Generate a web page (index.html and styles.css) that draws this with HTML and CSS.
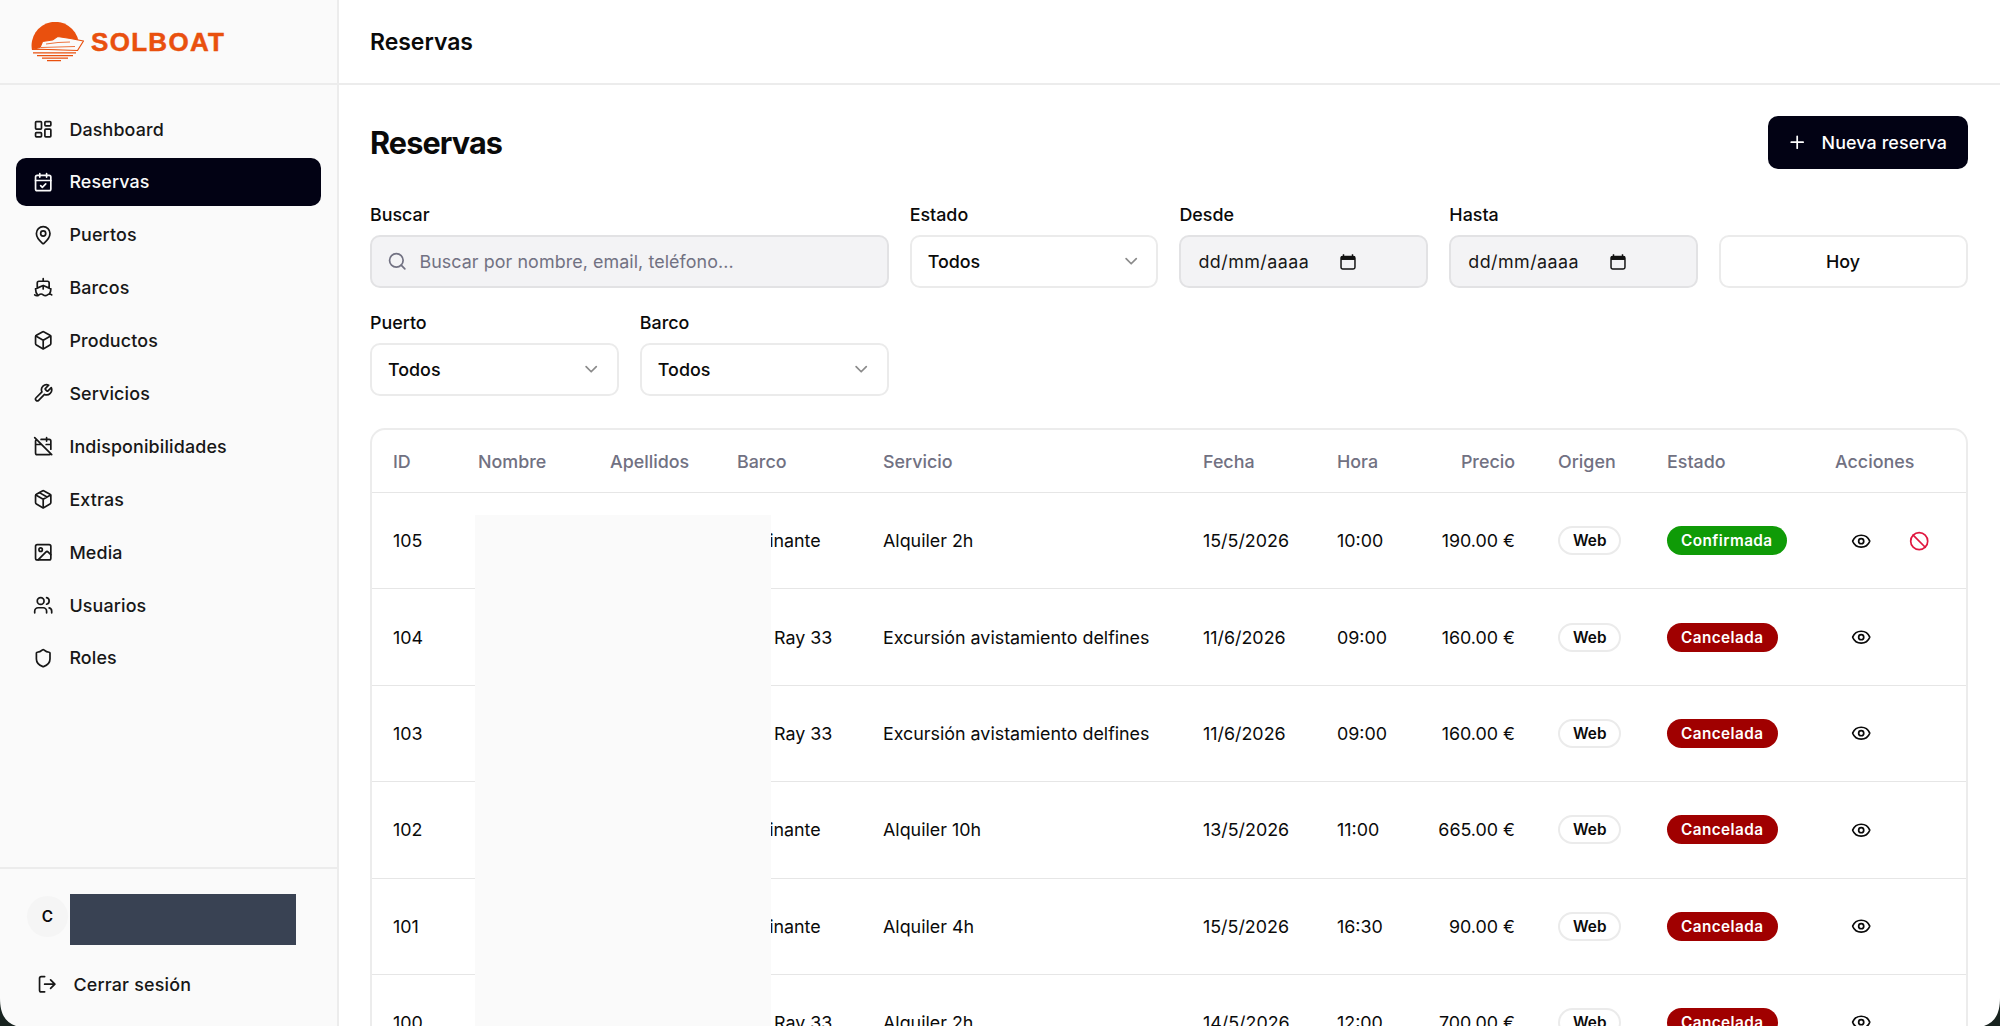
FILE: index.html
```html
<!DOCTYPE html>
<html lang="es">
<head>
    <meta charset="UTF-8">
    <title>Reservas - Solboat</title>
    <link rel="stylesheet" href="styles.css">
</head>
<body>

<svg class="sprite" width="0" height="0">
    <symbol id="i-dashboard" viewBox="0 0 24 24"><rect x="3" y="3" width="7" height="9" rx="1"/><rect x="14" y="3" width="7" height="5" rx="1"/><rect x="14" y="12" width="7" height="9" rx="1"/><rect x="3" y="16" width="7" height="5" rx="1"/></symbol>
    <symbol id="i-calendar" viewBox="0 0 24 24"><path d="M8 2v4M16 2v4M3 10h18m-12 6 2 2 4-4"/><rect x="3" y="4" width="18" height="18" rx="2"/></symbol>
    <symbol id="i-pin" viewBox="0 0 24 24"><path d="M20 10c0 4.993-5.539 10.193-7.399 11.799a1 1 0 0 1-1.202 0C9.539 20.193 4 14.993 4 10a8 8 0 0 1 16 0"/><circle cx="12" cy="10" r="3"/></symbol>
    <symbol id="i-ship" viewBox="0 0 24 24"><path d="M12 10.189V14M12 2v3M19 13V7a2 2 0 0 0-2-2H7a2 2 0 0 0-2 2v6M19.38 20A11.6 11.6 0 0 0 21 14l-8.188-3.639a2 2 0 0 0-1.624 0L3 14a11.6 11.6 0 0 0 2.81 7.76"/><path d="M2 21c.6.5 1.2 1 2.5 1 2.5 0 2.5-2 5-2 1.3 0 1.9.5 2.5 1s1.2 1 2.5 1c2.5 0 2.5-2 5-2 1.3 0 1.9.5 2.5 1"/></symbol>
    <symbol id="i-box" viewBox="0 0 24 24"><path d="M21 8a2 2 0 0 0-1-1.73l-7-4a2 2 0 0 0-2 0l-7 4A2 2 0 0 0 3 8v8a2 2 0 0 0 1 1.73l7 4a2 2 0 0 0 2 0l7-4A2 2 0 0 0 21 16Z"/><path d="m3.3 7 8.7 5 8.7-5M12 22V12"/></symbol>
    <symbol id="i-package" viewBox="0 0 24 24"><path d="M11 21.73a2 2 0 0 0 2 0l7-4A2 2 0 0 0 21 16V8a2 2 0 0 0-1-1.73l-7-4a2 2 0 0 0-2 0l-7 4A2 2 0 0 0 3 8v8a2 2 0 0 0 1 1.73z"/><path d="M12 22V12M3.29 7 12 12l8.71-5M7.5 4.27l9 5.15"/></symbol>
    <symbol id="i-wrench" viewBox="0 0 24 24"><path d="M14.7 6.3a1 1 0 0 0 0 1.4l1.6 1.6a1 1 0 0 0 1.4 0l3.77-3.77a6 6 0 0 1-7.94 7.94l-6.91 6.91a2.12 2.12 0 0 1-3-3l6.91-6.91a6 6 0 0 1 7.94-7.94l-3.76 3.76z"/></symbol>
    <symbol id="i-calendar-off" viewBox="0 0 24 24"><path d="M4.2 4.2A2 2 0 0 0 3 6v14a2 2 0 0 0 2 2h14a2 2 0 0 0 1.82-1.18M21 15.5V6a2 2 0 0 0-2-2H9.5M16 2v4M3 10h7M21 10h-5.5M2 2l20 20"/></symbol>
    <symbol id="i-image" viewBox="0 0 24 24"><rect x="3" y="3" width="18" height="18" rx="2"/><circle cx="9" cy="9" r="2"/><path d="m21 15-3.086-3.086a2 2 0 0 0-2.828 0L6 21"/></symbol>
    <symbol id="i-users" viewBox="0 0 24 24"><path d="M16 21v-2a4 4 0 0 0-4-4H6a4 4 0 0 0-4 4v2M22 21v-2a4 4 0 0 0-3-3.87M16 3.13a4 4 0 0 1 0 7.75"/><circle cx="9" cy="7" r="4"/></symbol>
    <symbol id="i-shield" viewBox="0 0 24 24"><path d="M20 13c0 5-3.5 7.5-7.66 8.95a1 1 0 0 1-.67-.01C7.5 20.5 4 18 4 13V6a1 1 0 0 1 1-1c2 0 4.5-1.2 6.24-2.72a1.17 1.17 0 0 1 1.52 0C14.51 3.81 17 5 19 5a1 1 0 0 1 1 1z"/></symbol>
    <symbol id="i-logout" viewBox="0 0 24 24"><path d="M9 21H5a2 2 0 0 1-2-2V5a2 2 0 0 1 2-2h4M16 17l5-5-5-5M21 12H9"/></symbol>
    <symbol id="i-search" viewBox="0 0 24 24"><path d="m21 21-4.3-4.3"/><circle cx="11" cy="11" r="8"/></symbol>
    <symbol id="i-chevron" viewBox="0 0 24 24"><path d="m6 9 6 6 6-6"/></symbol>
    <symbol id="i-plus" viewBox="0 0 24 24"><path d="M5 12h14M12 5v14"/></symbol>
    <symbol id="i-eye" viewBox="0 0 24 24"><path d="M2.062 12.348a1 1 0 0 1 0-.696 10.75 10.75 0 0 1 19.876 0 1 1 0 0 1 0 .696 10.75 10.75 0 0 1-19.876 0"/><circle cx="12" cy="12" r="3"/></symbol>
    <symbol id="i-ban" viewBox="0 0 24 24"><circle cx="12" cy="12" r="10"/><path d="m4.9 4.9 14.2 14.2"/></symbol>
</svg>

<aside class="sidebar">
    <div class="brand">
        <svg class="brand-mark" viewBox="30 22 54 40">
            <path class="sun" d="M32 50A23.500 23.500 0 0 1 78.500 41L76 50z"/>
            <path class="hull" d="M33 49l7-1.500 2.500-6 10-1.500 5-3.500 13 2 13 2.500-6 9.500z"/>
            <path class="hull-line" d="M46 44l12-1.500 12-.500M41 47.500l34-1"/>
            <path class="sun" d="M33 52.300h43v1.200H33zM37 55h36v1.200H37zM42 57.600h26v1.200H42zM47 60h14v1.200H47z"/>
        </svg>
        <span class="brand-name">SOLBOAT</span>
    </div>
    <nav class="nav">
        <a class="nav-item"><svg class="icon"><use href="#i-dashboard"/></svg>Dashboard</a>
        <a class="nav-item active"><svg class="icon"><use href="#i-calendar"/></svg>Reservas</a>
        <a class="nav-item"><svg class="icon"><use href="#i-pin"/></svg>Puertos</a>
        <a class="nav-item"><svg class="icon"><use href="#i-ship"/></svg>Barcos</a>
        <a class="nav-item"><svg class="icon"><use href="#i-box"/></svg>Productos</a>
        <a class="nav-item"><svg class="icon"><use href="#i-wrench"/></svg>Servicios</a>
        <a class="nav-item"><svg class="icon"><use href="#i-calendar-off"/></svg>Indisponibilidades</a>
        <a class="nav-item"><svg class="icon"><use href="#i-package"/></svg>Extras</a>
        <a class="nav-item"><svg class="icon"><use href="#i-image"/></svg>Media</a>
        <a class="nav-item"><svg class="icon"><use href="#i-users"/></svg>Usuarios</a>
        <a class="nav-item"><svg class="icon"><use href="#i-shield"/></svg>Roles</a>
    </nav>
    <div class="side-footer">
        <div class="user">
            <span class="avatar">C</span>
            <span class="user-hidden"></span>
        </div>
        <a class="logout"><svg class="icon"><use href="#i-logout"/></svg>Cerrar sesión</a>
    </div>
</aside>

<div class="main">
    <header class="topbar">Reservas</header>
    <div class="content">
        <div class="title-row">
            <h1>Reservas</h1>
            <button class="btn-new"><svg class="icon"><use href="#i-plus"/></svg>Nueva reserva</button>
        </div>

        <div class="filters">
            <div class="field wide">
                <label>Buscar</label>
                <div class="control muted search">
                    <svg class="icon"><use href="#i-search"/></svg>
                    <span>Buscar por nombre, email, teléfono...</span>
                </div>
            </div>
            <div class="field">
                <label>Estado</label>
                <div class="control select">Todos<svg class="icon"><use href="#i-chevron"/></svg></div>
            </div>
            <div class="field">
                <label>Desde</label>
                <div class="control muted date">dd/mm/aaaa
                    <svg class="cal" viewBox="0 0 16 16"><path d="M4 1v2M12 1v2"/><rect x="1.800" y="3" width="12.400" height="11.200" rx="1.500"/><rect class="cal-top" x="1.800" y="3" width="12.400" height="3.200"/></svg>
                </div>
            </div>
            <div class="field">
                <label>Hasta</label>
                <div class="control muted date">dd/mm/aaaa
                    <svg class="cal" viewBox="0 0 16 16"><path d="M4 1v2M12 1v2"/><rect x="1.800" y="3" width="12.400" height="11.200" rx="1.500"/><rect class="cal-top" x="1.800" y="3" width="12.400" height="3.200"/></svg>
                </div>
            </div>
            <div class="field">
                <label>&nbsp;</label>
                <button class="control today">Hoy</button>
            </div>
            <div class="field">
                <label>Puerto</label>
                <div class="control select">Todos<svg class="icon"><use href="#i-chevron"/></svg></div>
            </div>
            <div class="field">
                <label>Barco</label>
                <div class="control select">Todos<svg class="icon"><use href="#i-chevron"/></svg></div>
            </div>
        </div>

        <div class="table-card">
            <table>
                <colgroup>
                    <col class="c-id"><col class="c-name"><col class="c-last"><col class="c-boat"><col class="c-service">
                    <col class="c-date"><col class="c-time"><col class="c-price"><col class="c-origin"><col class="c-state"><col class="c-actions">
                </colgroup>
                <thead>
                    <tr>
                        <th>ID</th><th>Nombre</th><th>Apellidos</th><th>Barco</th><th>Servicio</th><th>Fecha</th><th>Hora</th>
                        <th class="price">Precio</th><th>Origen</th><th>Estado</th><th>Acciones</th>
                    </tr>
                </thead>
                <tbody>
                    <tr>
                        <td>105</td><td></td><td></td><td>Rocinante</td><td>Alquiler 2h</td><td>15/5/2026</td><td>10:00</td>
                        <td class="price">190.00 €</td><td><span class="badge web">Web</span></td><td><span class="badge ok">Confirmada</span></td>
                        <td><div class="actions"><svg class="icon"><use href="#i-eye"/></svg><svg class="icon danger"><use href="#i-ban"/></svg></div></td>
                    </tr>
                    <tr>
                        <td>104</td><td></td><td></td><td>Sea Ray 33</td><td>Excursión avistamiento delfines</td><td>11/6/2026</td><td>09:00</td>
                        <td class="price">160.00 €</td><td><span class="badge web">Web</span></td><td><span class="badge ko">Cancelada</span></td>
                        <td><div class="actions"><svg class="icon"><use href="#i-eye"/></svg></div></td>
                    </tr>
                    <tr>
                        <td>103</td><td></td><td></td><td>Sea Ray 33</td><td>Excursión avistamiento delfines</td><td>11/6/2026</td><td>09:00</td>
                        <td class="price">160.00 €</td><td><span class="badge web">Web</span></td><td><span class="badge ko">Cancelada</span></td>
                        <td><div class="actions"><svg class="icon"><use href="#i-eye"/></svg></div></td>
                    </tr>
                    <tr>
                        <td>102</td><td></td><td></td><td>Rocinante</td><td>Alquiler 10h</td><td>13/5/2026</td><td>11:00</td>
                        <td class="price">665.00 €</td><td><span class="badge web">Web</span></td><td><span class="badge ko">Cancelada</span></td>
                        <td><div class="actions"><svg class="icon"><use href="#i-eye"/></svg></div></td>
                    </tr>
                    <tr>
                        <td>101</td><td></td><td></td><td>Rocinante</td><td>Alquiler 4h</td><td>15/5/2026</td><td>16:30</td>
                        <td class="price">90.00 €</td><td><span class="badge web">Web</span></td><td><span class="badge ko">Cancelada</span></td>
                        <td><div class="actions"><svg class="icon"><use href="#i-eye"/></svg></div></td>
                    </tr>
                    <tr>
                        <td>100</td><td></td><td></td><td>Sea Ray 33</td><td>Alquiler 2h</td><td>14/5/2026</td><td>12:00</td>
                        <td class="price">700.00 €</td><td><span class="badge web">Web</span></td><td><span class="badge ko">Cancelada</span></td>
                        <td><div class="actions"><svg class="icon"><use href="#i-eye"/></svg></div></td>
                    </tr>
                </tbody>
            </table>
            <div class="table-hidden"></div>
        </div>
    </div>
</div>

<!-- window corners of the capture -->
<svg class="corner left" viewBox="0 0 16 28"><path d="M0 0C0 14 4 24 16 28H0z"/></svg>
<svg class="corner right" viewBox="0 0 16 28"><path d="M16 0C16 14 12 24 0 28H16z"/></svg>

</body>
</html>
```

FILE: styles.css
```css
html, body {
    height: 100%;
    overflow: hidden;
}

body {
    margin: 0;
    display: flex;
    position: relative;
    height: 1026px;
    font-family: Inter, "Liberation Sans", sans-serif;
    font-size: 17.86px;
    color: #0a0a0a;
    background-color: #fff;
}

.sprite {
    position: absolute;
}

symbol {
    overflow: visible;
}

.icon {
    width: 20.4px;
    height: 20.4px;
    flex: 0 0 auto;
    fill: none;
    stroke: currentColor;
    stroke-width: 2;
    stroke-linecap: round;
    stroke-linejoin: round;
}

/* Sidebar */
.sidebar {
    width: 339px;
    flex: 0 0 auto;
    box-sizing: border-box;
    display: flex;
    flex-direction: column;
    background-color: #fafafa;
    border-right: 2px solid #ececec;
}

.brand {
    height: 85px;
    box-sizing: border-box;
    display: flex;
    align-items: center;
    padding: 1px 0 0 30px;
    gap: 7px;
    border-bottom: 2px solid #ececec;
}

.brand-mark {
    width: 54px;
    height: 40px;
}

.sun {
    fill: #e9500e;
}

.hull {
    fill: #fafafa;
    stroke: #e9500e;
    stroke-width: 1.200;
    stroke-linejoin: round;
}

.hull-line {
    fill: none;
    stroke: #e9500e;
    stroke-width: 0.800;
}

.brand-name {
    font-family: "Liberation Sans", sans-serif;
    font-weight: 700;
    font-size: 26px;
    letter-spacing: 1.300px;
    color: #e9500e;
    -webkit-text-stroke: 0.500px #e9500e;
}

.nav {
    flex: 1;
    display: flex;
    flex-direction: column;
    gap: 4.900px;
    padding: 20px 16px 0;
}

.nav-item {
    height: 48px;
    display: flex;
    align-items: center;
    gap: 16px;
    padding-left: 17px;
    border-radius: 10px;
    font-weight: 500;
    letter-spacing: 0.150px;
    color: #171717;
}

.nav-item.active {
    background-color: #020214;
    color: #fafafa;
}

.side-footer {
    height: 159.500px;
    box-sizing: border-box;
    padding: 25px 0 0 27px;
    border-top: 2px solid #ececec;
}

.user {
    display: flex;
    align-items: flex-start;
    gap: 2px;
}

.avatar {
    width: 41px;
    height: 41px;
    margin-top: 2px;
    display: flex;
    align-items: center;
    justify-content: center;
    border-radius: 50%;
    background-color: #f5f5f5;
    font-size: 15.300px;
    font-weight: 600;
}

.user-hidden {
    width: 226px;
    height: 51px;
    background-color: #394253;
}

.logout {
    display: flex;
    align-items: center;
    gap: 16px;
    height: 40px;
    margin: 20px 0 0 10px;
    font-weight: 500;
    letter-spacing: 0.200px;
    color: #171717;
}

/* Main */
.main {
    flex: 1;
    min-width: 0;
    height: 1026px;
    overflow: hidden;
}

.topbar {
    height: 85px;
    box-sizing: border-box;
    display: flex;
    align-items: center;
    padding-left: 31px;
    font-size: 22.960px;
    font-weight: 600;
    border-bottom: 2px solid #ececec;
}

.content {
    padding: 31px 32px 0 31px;
}

.title-row {
    display: flex;
    align-items: center;
    justify-content: space-between;
    height: 53px;
}

h1 {
    margin: 0;
    font-size: 30.600px;
    font-weight: 700;
    letter-spacing: -0.900px;
}

.btn-new {
    height: 53px;
    display: flex;
    align-items: center;
    gap: 14px;
    padding: 0 21px 0 19px;
    border: none;
    border-radius: 10px;
    background-color: #020214;
    color: #fff;
    font: inherit;
    font-weight: 500;
    letter-spacing: 0.100px;
}

.filters {
    display: grid;
    grid-template-columns: repeat(6, 1fr);
    gap: 23px 21px;
    margin-top: 34px;
}

.field.wide {
    grid-column: span 2;
}

.field label {
    display: block;
    height: 23px;
    line-height: 23px;
    margin-bottom: 9px;
    font-weight: 500;
}

.control {
    height: 53px;
    width: 100%;
    box-sizing: border-box;
    display: flex;
    align-items: center;
    padding: 0 17px 0 16px;
    border: 2px solid #ebebeb;
    border-radius: 10px;
    background-color: #fff;
    font: inherit;
    font-weight: 500;
}

.control.muted {
    background-color: #f3f3f5;
    border-color: #e2e2e4;
    font-weight: 400;
}

.control.search {
    gap: 12px;
    padding-left: 15px;
    letter-spacing: 0.080px;
    color: #717182;
}

.select {
    justify-content: space-between;
}

.select .icon {
    color: #8b8b8b;
    margin-right: -2px;
}

.control.date {
    gap: 30px;
    padding-left: 17px;
    letter-spacing: 0.450px;
    color: #171717;
}

.cal {
    width: 18px;
    height: 18px;
    fill: none;
    stroke: #111;
    stroke-width: 1.300;
}

.cal-top {
    fill: #111;
    stroke: none;
}

.today {
    justify-content: center;
    color: #0a0a0a;
}

/* Table */
.table-card {
    position: relative;
    margin-top: 32px;
    border: 2px solid #ececec;
    border-radius: 15px;
}

table {
    width: 100%;
    table-layout: fixed;
    border-collapse: collapse;
}

.c-id { width: 94px; }
.c-name { width: 132px; }
.c-last { width: 127px; }
.c-boat { width: 146px; }
.c-service { width: 320px; }
.c-date { width: 134px; }
.c-time { width: 105px; }
.c-price { width: 116px; }
.c-origin { width: 109px; }
.c-state { width: 168px; }

th, td {
    padding: 0 0 0 12px;
    text-align: left;
    white-space: nowrap;
    border-bottom: 1px solid #e6e6e6;
}

th:first-child, td:first-child {
    padding-left: 21px;
}

th {
    height: 62px;
    font-weight: 500;
    color: #717182;
}

td {
    height: 95.400px;
}

th.price, td.price {
    padding: 0 31px 0 0;
    text-align: right;
}

.badge {
    display: inline-flex;
    align-items: center;
    height: 29px;
    box-sizing: border-box;
    padding: 0 14px;
    border-radius: 15px;
    font-size: 15.300px;
    font-weight: 600;
    letter-spacing: 0.450px;
    vertical-align: middle;
}

.badge.web {
    border: 2px solid #ebebeb;
    padding: 0 13px;
    letter-spacing: 0;
}

.badge.ok {
    background-color: #0f9b07;
    color: #fff;
}

.badge.ko {
    background-color: #a00000;
    color: #fff;
}

.actions {
    display: flex;
    gap: 37.600px;
    padding-left: 16px;
}

.danger {
    color: #e0173f;
}

.table-hidden {
    position: absolute;
    left: 103px;
    top: 85px;
    width: 296px;
    height: 600px;
    background-color: #fafafa;
}

.corner {
    position: absolute;
    bottom: 0;
    width: 16px;
    height: 28px;
    fill: #18231f;
}

.corner.left {
    left: 0;
}

.corner.right {
    right: 0;
}
```
